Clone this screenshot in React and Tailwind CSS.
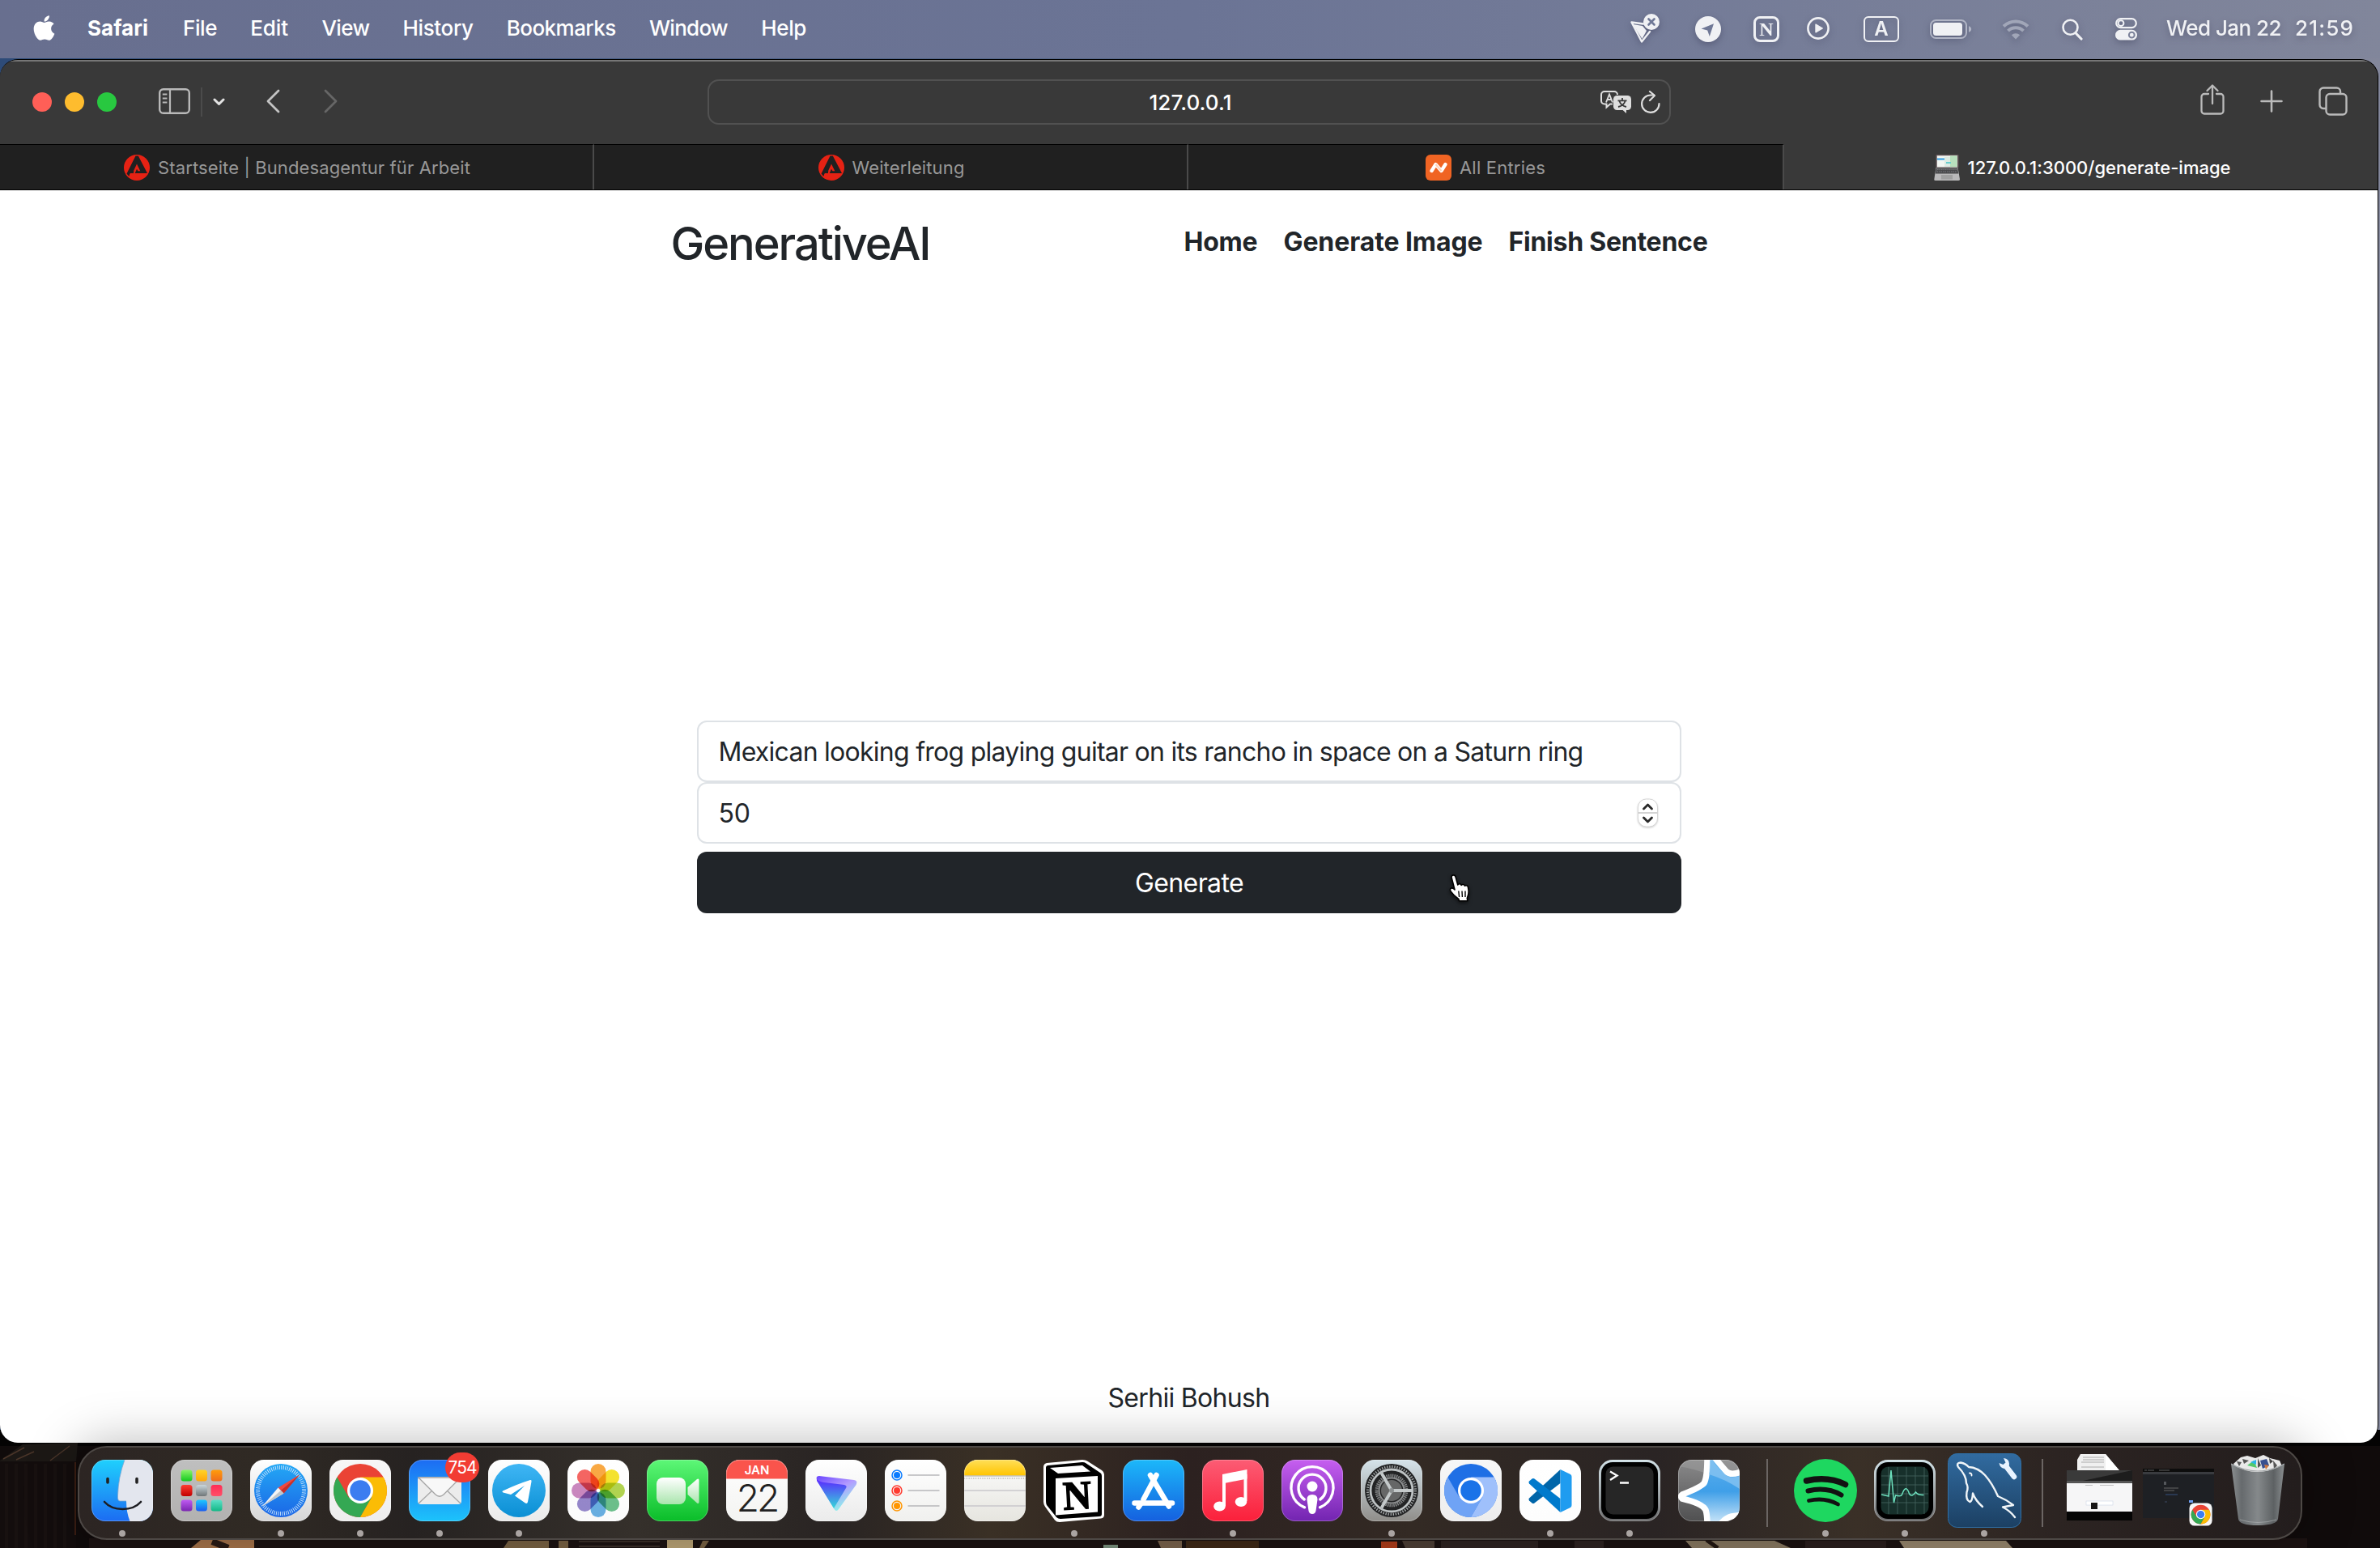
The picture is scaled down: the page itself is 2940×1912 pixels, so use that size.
import { useLayoutEffect, useRef, useState } from "react";
import { FaApple } from "react-icons/fa";

/* Text whose tracking is adjusted so that it spans a given width. */
function Fit({ w, className = "", children }) {
  const ref = useRef(null);
  const [ls, setLs] = useState(0);
  useLayoutEffect(() => {
    const natural = ref.current.getBoundingClientRect().width;
    setLs((w - natural) / children.length);
  }, []);
  return (
    <span ref={ref} className={"inline-block whitespace-pre " + className} style={{ letterSpacing: ls + "px" }}>
      {children}
    </span>
  );
}

/* ---------- Menu bar ---------- */

function MenuBar() {
  const menus = [
    ["File", 42], ["Edit", 47], ["View", 59], ["History", 87],
    ["Bookmarks", 135], ["Window", 97], ["Help", 56],
  ];
  return (
    <header className="flex h-[72px] shrink-0 items-center bg-linear-to-r from-[#686f8f] via-[#6b7495] to-[#81869b] pr-[32px] pb-[3px] pl-[41px] text-[26px] text-white">
      <FaApple className="mb-[1px] h-[35px] w-[27px]" />
      <Fit w={75} className="ml-[40px] font-bold">Safari</Fit>
      <nav className="ml-[43px] flex gap-[41.2px] font-medium">
        {menus.map(([t, w]) => <Fit key={t} w={w}>{t}</Fit>)}
      </nav>
      <div className="ml-auto flex items-center text-[#f0f1f4] drop-shadow-[0_3px_4px_rgba(40,40,70,0.35)]">
        <svg className="h-[36px] w-[36px]" viewBox="0 0 36 36" fill="none">
          <path d="M1.5 10.5 16 12.5M1.5 10.5 14 34.5 24 22" stroke="currentColor" strokeWidth="2.4" strokeLinejoin="round" strokeLinecap="round" />
          <path d="M3 13 15 15 20 21 14.5 31Z" fill="currentColor" />
          <circle cx="26" cy="10" r="10" fill="currentColor" />
          <path d="M22.5 6.5 29.5 13.5M29.5 6.5 22.5 13.5" stroke="#6f7896" strokeWidth="2.6" strokeLinecap="round" />
        </svg>
        <svg className="mt-[2px] ml-[44px] h-[32px] w-[32px]" viewBox="0 0 32 32">
          <circle cx="16" cy="16" r="16" fill="currentColor" />
          <path d="M23 9.3 7.6 15.4 15.2 17.6 17.8 25Z" fill="#6f7896" />
        </svg>
        <svg className="mt-[2px] ml-[40px] h-[32px] w-[32px]" viewBox="0 0 32 32" fill="none">
          <rect x="1.5" y="1.5" width="29" height="29" rx="6.5" stroke="currentColor" strokeWidth="3" />
          <text x="16" y="24" textAnchor="middle" fontFamily="Liberation Serif, serif" fontWeight="bold" fontSize="24" fill="currentColor">N</text>
        </svg>
        <svg className="ml-[34px] h-[28px] w-[28px]" viewBox="0 0 28 28" fill="none">
          <circle cx="14" cy="14" r="12.6" stroke="currentColor" strokeWidth="2.6" />
          <path d="M11 9.2v9.6L19.3 14Z" fill="currentColor" stroke="currentColor" strokeWidth="1.4" strokeLinejoin="round" />
        </svg>
        <span className="mt-[2px] ml-[42px] flex h-[32px] w-[44px] items-center justify-center rounded-[6px] border-[2.4px] border-current text-[24px] leading-none font-semibold">A</span>
        <svg className="mt-[2px] ml-[38px] h-[24px] w-[52px]" viewBox="0 0 52 24" fill="none">
          <rect x="1" y="1" width="44" height="22" rx="6.5" stroke="#b1b5c5" strokeWidth="2" />
          <rect x="4" y="4" width="36" height="16" rx="3.5" fill="currentColor" />
          <path d="M48 8.2c2 .6 3.2 2 3.2 3.8S50 15.200 48 15.800Z" fill="#b1b5c5" />
        </svg>
        <svg className="mt-[2px] ml-[37px] h-[26px] w-[34px] text-[#a1a6b8]" viewBox="0 0 34 26" fill="none">
          <path d="M2 9.500a21.500 21.500 0 0 1 30 0" stroke="currentColor" strokeWidth="4" />
          <path d="M7.500 15.200a13.500 13.500 0 0 1 19 0" stroke="currentColor" strokeWidth="4" />
          <path d="M17 25.500 11.800 20.300a7.400 7.400 0 0 1 10.400 0Z" fill="currentColor" />
        </svg>
        <svg className="mt-[3px] ml-[40px] h-[27px] w-[26px]" viewBox="0 0 26 27" fill="none" stroke="currentColor" strokeLinecap="round">
          <circle cx="10.500" cy="10.800" r="9" strokeWidth="2.600" />
          <path d="M17.200 18 24 25" strokeWidth="3.200" />
        </svg>
        <svg className="mt-[2px] ml-[40px] h-[28px] w-[27px]" viewBox="0 0 27 28" fill="none">
          <rect x="1.200" y="1.200" width="24.600" height="11" rx="5.500" stroke="currentColor" strokeWidth="2.200" />
          <circle cx="7" cy="6.700" r="3.400" stroke="currentColor" strokeWidth="2" />
          <rect x="0" y="14.800" width="27" height="12.800" rx="6.400" fill="currentColor" />
          <circle cx="20.300" cy="21.200" r="3.400" stroke="#7b8199" strokeWidth="2" />
        </svg>
        <Fit w={142} className="ml-[36px] font-medium">Wed Jan 22</Fit>
        <Fit w={73} className="ml-[17px] font-medium">21:59</Fit>
      </div>
    </header>
  );
}

/* ---------- Browser chrome ---------- */

function Toolbar() {
  return (
    <div className="grid h-[104px] grid-cols-[874px_1190px_1fr] items-center border-t-2 border-[#777777] bg-[#393939] pb-[2px]">
      <div className="flex items-center pl-[40px]">
        <div className="flex gap-[16px]">
          <i className="size-[24px] rounded-full bg-[#ff5f57]" />
          <i className="size-[24px] rounded-full bg-[#febc2e]" />
          <i className="size-[24px] rounded-full bg-[#28c840]" />
        </div>
        <svg className="mb-[3px] ml-[52px] h-[32px] w-[39px] text-[#b9b9b9]" viewBox="0 0 39 32" fill="none" stroke="currentColor">
          <rect x="1.200" y="1.200" width="36.600" height="29.600" rx="4.500" strokeWidth="2.400" />
          <path d="M14 1v30" strokeWidth="2.200" />
          <path d="M4.800 7.500h5.600M4.800 12.500h5.600M4.800 17.500h5.600" strokeWidth="2" />
        </svg>
        <i className="ml-[13px] h-[36px] w-[2px] bg-[#4b4b4b]" />
        <svg className="ml-[13px] h-[10px] w-[15px]" viewBox="0 0 15 10" fill="none" stroke="#e3e3e3" strokeWidth="3" strokeLinecap="round" strokeLinejoin="round"><path d="M2 2l5.500 5.500L13 2" /></svg>
        <svg className="mb-[3px] ml-[51px] h-[30px] w-[17px]" viewBox="0 0 17 30" fill="none" stroke="#c4c4c4" strokeWidth="2.800" strokeLinecap="round" strokeLinejoin="round"><path d="M15 2 2 15l13 13" /></svg>
        <svg className="mb-[3px] ml-[54px] h-[30px] w-[17px]" viewBox="0 0 17 30" fill="none" stroke="#666666" strokeWidth="2.800" strokeLinecap="round" strokeLinejoin="round"><path d="M2 2l13 13L2 28" /></svg>
      </div>
      <div className="flex h-[56px] items-center rounded-[14px] border-2 border-[#515151] text-[26px] font-medium text-white">
        <span className="w-[1101px] pl-[88px] text-center"><Fit w={102}>127.0.0.1</Fit></span>
        <svg className="h-[28px] w-[38px] shrink-0" viewBox="0 0 38 28" fill="none">
          <path d="M15 16.500h-3L7.500 20.500v-4H5A4 4 0 0 1 1 12.500v-7.500A4 4 0 0 1 5 1h12a4 4 0 0 1 4 4" stroke="#dedede" strokeWidth="2" />
          <path d="M7 14.500 11 4.500l4 10M8.300 11h5.400" stroke="#dedede" strokeWidth="1.900" />
          <rect x="16" y="6" width="22" height="18" rx="4.500" fill="#dedede" />
          <path d="M26.500 23v0l5.500 5v-5Z" fill="#dedede" />
          <path d="M21.500 12.300h11M27 9v3M23.500 13c1 3 4 6 8.500 7M30.500 13c-1 3-4 6-8.500 7" stroke="#393939" strokeWidth="1.800" />
        </svg>
        <svg className="ml-[12px] h-[28px] w-[24px] shrink-0" viewBox="0 0 24 28" fill="none" stroke="#dedede" strokeWidth="2.200" strokeLinecap="round" strokeLinejoin="round">
          <path d="M22.500 16A10.700 10.700 0 1 1 11.800 5.500H16" />
          <path d="M11 1l6 5-6 6" />
        </svg>
      </div>
      <div className="flex items-center justify-end pr-[37px] pb-[3px] text-[#bababa]">
        <svg className="mb-[3px] h-[38px] w-[30px]" viewBox="0 0 30 38" fill="none" stroke="currentColor" strokeWidth="2.300" strokeLinecap="round" strokeLinejoin="round">
          <path d="M10 12H5a3.500 3.500 0 0 0-3.500 3.500V33A3.500 3.500 0 0 0 5 36.500h20a3.500 3.500 0 0 0 3.500-3.500V15.500A3.500 3.500 0 0 0 25 12h-5M15 24V2M8.500 8 15 1.500 21.500 8" />
        </svg>
        <svg className="ml-[44px] h-[28px] w-[28px]" viewBox="0 0 28 28" fill="none" stroke="currentColor" strokeWidth="2.600" strokeLinecap="round"><path d="M14 1.500v25M1.500 14h25" /></svg>
        <svg className="ml-[44px] h-[36px] w-[36px]" viewBox="0 0 36 36" fill="none" stroke="currentColor" strokeWidth="2.400">
          <rect x="9.500" y="9" width="25" height="25.500" rx="4.500" />
          <path d="M9 27H6a4.500 4.500 0 0 1-4.500-4.500V6A4.500 4.500 0 0 1 6 1.500h16.500A4.500 4.500 0 0 1 27 6v3" />
        </svg>
      </div>
    </div>
  );
}

const AgencyIcon = () => (
  <svg className="size-[32px]" viewBox="0 0 32 32">
    <circle cx="16" cy="16" r="16" fill="#e62214" />
    <path d="M14.500 1.500h3.300L29 23H7.800L6.500 27 3.500 23.500Z" fill="#202020" />
    <path d="M12.300 19.500 16 11.500l4.300 8.800h-2.800L16 17.800l-2.300 5.200-2.300 4.500Z" fill="#e62214" />
    <path d="M7.500 24h20.500A16 16 0 0 1 5.800 28.300Z" fill="#e62214" />
  </svg>
);
const NamecheapIcon = () => (
  <svg className="size-[32px]" viewBox="0 0 32 32">
    <rect width="32" height="32" rx="6" fill="#f06423" />
    <path d="M7.500 20 12.500 12 19.500 20 24.500 12" stroke="#fff" strokeWidth="4.300" fill="none" strokeLinecap="round" strokeLinejoin="round" />
    <path d="M12.500 12 19.500 20" stroke="#ffd2b8" strokeWidth="2" />
  </svg>
);
const LaptopIcon = () => (
  <svg className="size-[32px]" viewBox="0 0 32 32">
    <rect x="2.500" y="0" width="28" height="16" rx="1" fill="#6b5a5e" />
    <rect x="3.800" y="1.300" width="25" height="14" fill="#f3f7f2" />
    <path d="M13 3h7v12h-7Z" fill="#dcebe3" /><path d="M20 1.300h8.800v14H20Z" fill="#b8e0bd" />
    <path d="M4 4.500h9v2H4Z" fill="#2f9be0" /><path d="M15 9h6v2h-6Z" fill="#69cfd0" />
    <path d="M2.500 16h27L32 30.500Q32 32 30 32H2Q0 32 .3 30.500Z" fill="#b9b8b9" />
    <path d="M2.800 16.500h26.400l1 7H1.800Z" fill="#4a4a4c" />
    <path d="M4 18.500h24M3.500 21h25" stroke="#85858a" strokeWidth=".8" strokeDasharray="1.500 1" />
    <path d="M9 25h14v5.500H9Z" fill="#a0a0a0" />
  </svg>
);

function Tabs() {
  const tabs = [
    { icon: <AgencyIcon />, t: "Startseite | Bundesagentur für Arbeit", w: 386, box: "w-[734px] pl-[2px]" },
    { icon: <AgencyIcon />, t: "Weiterleitung", w: 139, box: "w-[734px] pl-[2px]" },
    { icon: <NamecheapIcon />, t: "All Entries", w: 106, box: "w-[736px]" },
  ];
  return (
    <div className="flex h-[57px] border-b border-black bg-[#393939] text-[22px]">
      {tabs.map(({ icon, t, w, box }) => (
        <div key={t} className={"flex shrink-0 items-center justify-center gap-[10px] border-t border-r-2 border-t-black border-r-[#4a4a4a] bg-[#202020] pt-[1px] text-[#989898] " + box}>
          {icon}
          <Fit w={w} className="pt-px">{t}</Fit>
        </div>
      ))}
      <div className="flex grow items-center justify-center gap-[10px] pt-[2px] pl-[3px] font-medium text-white">
        <LaptopIcon />
        <Fit w={325} className="pt-px">127.0.0.1:3000/generate-image</Fit>
      </div>
    </div>
  );
}

/* ---------- Web page ---------- */

function HandCursor() {
  return (
    <svg className="absolute top-[27px] left-[926px] h-[38px] w-[32px] drop-shadow-[0_2px_2px_rgba(0,0,0,0.6)]" viewBox="0 0 32 38">
      <path d="M6 4.500c0-3.500 4.600-3.500 5.200 0l2.600 9.500c.8-2 3.800-1.800 4.300.4 1-1.500 3.900-1.100 4.300.8 1.300-1.200 3.900-.4 4.100 1.800 .8 3.500 .8 8-.4 11l-.8 2.500 .6 3.200H15.500l-.6-2.200C11.500 29 8.500 27 5.500 22.500c-2.600-3.600.4-6 3.400-3.600l1.100 1Z" fill="#fff" stroke="#000" strokeWidth="1.600" strokeLinejoin="round" />
      <path d="M14.800 21.500l.8 7.500M19 21.500l.4 7.500M23 21.500v7.500" stroke="#000" strokeWidth="1.400" />
    </svg>
  );
}

function Page() {
  return (
    <main className="flex grow flex-col bg-white text-[32px] text-[#212529]">
      <header className="mx-auto flex w-[1280px] items-center justify-between pt-[30px]">
        <Fit w={320} className="pt-px text-[56px] leading-[70px] font-medium">GenerativeAI</Fit>
        <nav className="-mr-px flex gap-[32px] pb-[4px] font-bold">
          <Fit w={91}>Home</Fit>
          <Fit w={246}>Generate Image</Fit>
          <Fit w={246}>Finish Sentence</Fit>
        </nav>
      </header>
      <form className="mx-auto mt-[554px] flex w-[1216px] flex-col">
        <div className="flex h-[76px] items-center rounded-[12px] border-2 border-[#dee2e6] pt-[2px] pl-[25px]">
          <Fit w={1068}>Mexican looking frog playing guitar on its rancho in space on a Saturn ring</Fit>
        </div>
        <div className="flex h-[76px] items-center justify-between rounded-[12px] border-2 border-[#dee2e6] pr-[27px] pl-[25px]">
          <Fit w={39} className="pt-[2px]">50</Fit>
          <svg className="h-[36px] w-[25px] drop-shadow-[0_1px_1px_rgba(0,0,0,0.2)]" viewBox="0 0 25 36" fill="none">
            <rect x=".5" y="1" width="24" height="34" rx="10" fill="#fff" stroke="#d6d6d6" />
            <path d="M0 18h25" stroke="#d3d3d3" strokeWidth="2" />
            <path d="M7.500 13l5-5 5 5M7.500 24l5 5 5-5" stroke="#2a2a2a" strokeWidth="2.800" strokeLinecap="round" strokeLinejoin="round" />
          </svg>
        </div>
        <div className="relative mt-[10px] flex h-[76px] items-center justify-center rounded-[12px] bg-[#212529] pt-[2px] pl-px text-white">
          <Fit w={134}>Generate</Fit>
          <HandCursor />
        </div>
      </form>
      <footer className="mt-auto flex h-[110px] items-center justify-center"><Fit w={200}>Serhii Bohush</Fit></footer>
    </main>
  );
}

/* ---------- Dock ---------- */

const Grad = ({ id, a, b, m }) => (
  <linearGradient id={id} x1="0" y1="0" x2="0" y2="1">
    <stop offset="0" stopColor={a} />
    {m && <stop offset=".5" stopColor={m} />}
    <stop offset="1" stopColor={b} />
  </linearGradient>
);
const Tile = ({ id, a, b, children }) => (
  <svg className="size-[76px] overflow-visible" viewBox="0 0 76 76" fill="none">
    <defs>
      <Grad id={id} a={a} b={b} />
      <clipPath id={id + "clip"}><rect width="76" height="76" rx="17" /></clipPath>
    </defs>
    <g clipPath={`url(#${id}clip)`}>
      <rect width="76" height="76" fill={`url(#${id})`} />
      {children}
    </g>
    <rect x=".5" y=".5" width="75" height="75" rx="16.500" stroke="#ffffff" strokeOpacity=".25" />
  </svg>
);

const Finder = () => (
  <Tile id="finder" a="#1fd0fd" b="#1c6cf2">
    <path d="M41 0Q33 22 32.500 44 32 50.500 35 51H43q0 14 4.500 25H76V0Z" fill="#e3e6ee" />
    <path d="M41 0Q33 22 32.500 44 32 51 35 51H43" stroke="#7fa6cf" strokeWidth=".8" />
    <path d="M20 23.500v4.500M56 23.500v4.500" stroke="#222" strokeWidth="3.600" strokeLinecap="round" />
    <path d="M16 52Q24 61 38.500 61T61 52" stroke="#1d1d22" strokeWidth="2.600" strokeLinecap="round" />
  </Tile>
);
const pads = [
  ["#8bf36a", "#13c91e"], ["#ffd426", "#ffa60a"], ["#ff9d0a", "#ef6c1c"],
  ["#ff3b30", "#c10000"], ["#c9d6dc", "#707678"], ["#ff2d55", "#ff4f68"],
  ["#bf5af2", "#7a26b0"], ["#1fc8ff", "#1a5cf0"], ["#5de0c8", "#12b886"],
];
const Launchpad = () => (
  <Tile id="launch" a="#bfbfbf" b="#b2b1b0">
    <defs>{pads.map(([a, b], i) => <Grad key={i} id={"pad" + i} a={a} b={b} />)}</defs>
    {pads.map((p, i) => <rect key={i} x={12.500 + (i % 3) * 18.500} y={12.500 + Math.floor(i / 3) * 18.500} width="14" height="14" rx="3.500" fill={`url(#pad${i})`} />)}
  </Tile>
);
const Safari = () => (
  <Tile id="safari" a="#ffffff" b="#d6d6d6">
    <defs><Grad id="saf2" a="#23a8f5" b="#1b66e6" /></defs>
    <circle cx="38" cy="38" r="33" fill="url(#saf2)" />
    <circle cx="38" cy="38" r="28.500" stroke="#cfe8fd" strokeWidth="5" strokeDasharray=".9 1.590" />
    <path d="M61 18.500 34.500 34.500 41.500 41.500Z" fill="#f0483e" />
    <path d="M15 57.500 34.500 34.500 41.500 41.500Z" fill="#f4f4f4" />
    <path d="M61 18.500 41.500 41.500 38 38Z" fill="#c4302b" /><path d="M15 57.500 41.500 41.500 38 38Z" fill="#bfc6cc" />
  </Tile>
);
const ChromeMark = ({ r = 33, c = ["#ea4335", "#34a853", "#fbbc05", "#3b7df0"] }) => (
  <g transform={`translate(38 38) scale(${r / 33})`}>
    <circle r="33" fill={c[0]} />
    <path d="M-28.600-16.500A33 33 0 0 0 0 33L14.300 8.200H-14.300Z" fill={c[1]} />
    <path d="M28.600-16.500A33 33 0 0 1 0 33L14.300 8.200 0-16.500Z" fill={c[2]} />
    <circle r="16" fill="#fff" /><circle r="12.800" fill={c[3]} />
  </g>
);
const Chrome = () => <Tile id="chrome" a="#f7f7f7" b="#ededed"><ChromeMark /></Tile>;
const Chromium = () => (
  <Tile id="chromium" a="#f7f7f7" b="#ededed"><ChromeMark c={["#1f6fe5", "#6fa3f5", "#9fc0fb", "#1a73e8"]} /></Tile>
);
const Mail = () => (
  <div className="relative">
    <Tile id="mail" a="#1d6cf3" b="#1cc3fb">
      <rect x="11" y="21" width="54" height="34" rx="4" fill="#ececec" />
      <path d="M12 54 30 37M64 54 46 37" stroke="#a9a9a9" strokeWidth="1.400" />
      <path d="M12 22 33 43q5 4.500 10 0L64 22Z" fill="#f8f8f8" stroke="#a3a3a3" strokeWidth="1.300" />
    </Tile>
    <span className="absolute -top-[9px] -right-[11px] flex h-[37px] w-[42px] items-center justify-center rounded-full bg-[#f23c33] text-[21px] font-normal tracking-[-1px] text-white">754</span>
  </div>
);
const Telegram = () => (
  <Tile id="tg" a="#ffffff" b="#eaeaea">
    <defs><Grad id="tg2" a="#3fb6f5" b="#0a8fd4" /></defs>
    <circle cx="38" cy="38" r="33" fill="url(#tg2)" />
    <path d="M18 38.500Q36 30 52 25q2-.5 1.500 2L49 52q-.8 3-3.500 1.200L33 44.500 45 32 28 43 18.500 40.500q-2-1-.5-2Z" fill="#fff" />
  </Tile>
);
const petals = ["#f99d2a", "#f4df12", "#a9cf38", "#57b97c", "#55a5e0", "#8878c5", "#c478b8", "#f4504c"];
const Photos = () => (
  <Tile id="photos" a="#ffffff" b="#fbfbfb">
    {petals.map((c, i) => <rect key={c} x="28.500" y="5" width="19" height="31" rx="9.500" fill={c} opacity=".88" transform={`rotate(${i * 45} 38 38)`} className="mix-blend-multiply" />)}
  </Tile>
);
const FaceTime = () => (
  <Tile id="ft" a="#5df777" b="#0abd29">
    <defs><Grad id="ft2" a="#ffffff" b="#a9e5ad" /></defs>
    <rect x="12" y="22" width="36" height="33" rx="8" fill="url(#ft2)" />
    <path d="M50.500 34 62 24q2.500-1.500 2.500 1.500v26.500q0 3-2.500 1.500L50.500 43Z" fill="url(#ft2)" />
  </Tile>
);
const Calendar = () => (
  <Tile id="cal" a="#ffffff" b="#f3f3f1">
    <rect width="76" height="23.500" fill="#fa544c" />
    <text x="38" y="18" textAnchor="middle" fontFamily="Inter, sans-serif" fontWeight="600" fontSize="15" fill="#fff">JAN</text>
    <text x="38" y="64" textAnchor="middle" fontFamily="Inter, sans-serif" fontWeight="300" fontSize="46" letterSpacing="-3" fill="#222">22</text>
  </Tile>
);
const Proton = () => (
  <Tile id="pv" a="#ffffff" b="#ebebeb">
    <defs>
      <linearGradient id="pv1" x1="0" y1="0" x2=".6" y2="1"><stop offset="0" stopColor="#6a45ff" /><stop offset=".5" stopColor="#b39bff" /><stop offset="1" stopColor="#8df5ea" /></linearGradient>
      <Grad id="pv2" a="#5a26ff" b="#35d8d8" />
    </defs>
    <path d="M17 20 60 25q5 1 2.500 6L41 61q-3 4-5.500 0L14 25q-1.500-5 3-5Z" fill="url(#pv1)" />
    <path d="M14 24q2 3 6 3.500L48 31q4 1 2 4L35 60 14 26Z" fill="url(#pv2)" />
  </Tile>
);
const Reminders = () => (
  <Tile id="rem" a="#ffffff" b="#f0f0ee">
    {["#0a7bff", "#ff3b30", "#ff9500"].map((c, i) => (
      <g key={c}>
        <circle cx="15" cy={19 + i * 19} r="6" stroke={c} strokeWidth="1.500" /><circle cx="15" cy={19 + i * 19} r="4" fill={c} />
        <path d={`M28.500 ${19 + i * 19}h39`} stroke="#b7b7ba" strokeWidth="1.500" />
      </g>
    ))}
  </Tile>
);
const Notes = () => (
  <Tile id="notes" a="#fcfcfc" b="#e6e5df">
    <defs><Grad id="nt" a="#ffdf58" b="#ffc400" /></defs>
    <rect width="76" height="19.500" fill="url(#nt)" />
    <path d="M0 20h76" stroke="#aaa8a0" /><path d="M0 23h76" stroke="#c5c4bf" strokeWidth="2" strokeDasharray="1.200 1.600" />
    <path d="M0 38h76M0 57h76" stroke="#c9c8cb" strokeWidth="1.300" />
  </Tile>
);
const Notion = () => (
  <svg className="size-[80px]" viewBox="0 0 80 80" fill="none">
    <path d="M6 6 50 2q4 0 6 1.500L74 15q3 2 3 5v50q0 4-4 4.500L22 79q-4 0-6-2.500L4 60q-2-3-2-6V11q0-4 4-5Z" fill="#fff" />
    <path d="M8 9 50 5q3 0 4 1L72 18q2 1 2 4v47q0 3-3 3L23 75q-3 0-5-2L6 58q-1-2-1-5V12q0-3 3-3Z" fill="#000" />
    <path d="M10 12 50 9 60 16.500 20 19Z" fill="#fff" />
    <path d="M17 25 69 22V66.500L17 70.500Z" fill="#fff" />
    <text x="43.500" y="63" textAnchor="middle" transform="rotate(-3 43 46)" fontFamily="Liberation Serif, serif" fontWeight="bold" fontSize="50" textLength="35" lengthAdjust="spacingAndGlyphs" fill="#000" stroke="#000" strokeWidth="1.500">N</text>
  </svg>
);
const AppStore = () => (
  <Tile id="as" a="#1cb8fa" b="#1560df">
    <g stroke="#fff" strokeWidth="6.500" strokeLinecap="round">
      <path d="M14.500 53.500H61" /><path d="M41.500 19 25.500 49" /><path d="M34 19 57 57.500" /><path d="M21.500 55.500 19.500 58.500" />
    </g>
  </Tile>
);
const Music = () => (
  <Tile id="mu" a="#fc5c74" b="#fb1f3a">
    <path d="M27 24v33M53.500 18v33" stroke="#fff" strokeWidth="4" />
    <path d="M25 18 55.500 12v11.500L25 29.500Z" fill="#fff" />
    <ellipse cx="21.500" cy="57.500" rx="7.300" ry="6" fill="#fff" /><ellipse cx="48" cy="52" rx="7.300" ry="6" fill="#fff" />
  </Tile>
);
const Podcasts = () => (
  <Tile id="pod" a="#c65ff0" b="#7224b0">
    <path d="M28.500 59.800A26 26 0 1 1 47.500 59.800" stroke="#fff" strokeWidth="3.400" strokeLinecap="round" transform="translate(0 -1)" />
    <path d="M28.200 48.500A17 17 0 1 1 47.800 48.500" stroke="#fff" strokeWidth="3.400" strokeLinecap="round" transform="translate(0 .5)" />
    <circle cx="38" cy="33" r="6.500" fill="#fff" />
    <path d="M31.500 49q0-6 6.500-6t6.500 6L42.500 63q-.8 4-4.500 4t-4.500-4Z" fill="#fff" />
  </Tile>
);
const Settings = () => (
  <Tile id="set" a="#d5e3ea" b="#8f8d89">
    <circle cx="38" cy="38" r="33" fill="#232425" />
    <circle cx="38" cy="38" r="29.500" stroke="#a9adae" strokeWidth="3" strokeDasharray="1.300 1.790" />
    <circle cx="38" cy="38" r="26" stroke="#bec3c4" strokeWidth="2.800" />
    <circle cx="38" cy="38" r="18.500" stroke="#858788" strokeWidth="3.800" strokeDasharray="1.500 1" />
    <circle cx="38" cy="38" r="15.500" stroke="#8b8d8e" strokeWidth="2" />
    <circle cx="38" cy="38" r="13" fill="#666767" />
    <path d="M38 38H63M38 38 25.500 16.500M38 38 25.500 59.500" stroke="#c4c9ca" strokeWidth="3.800" />
    <circle cx="38" cy="38" r="3" fill="#8c9091" />
  </Tile>
);
const VsCode = () => (
  <Tile id="vs" a="#ffffff" b="#fdfdfd">
    <path d="M50.500 12 12 47.500q-1.200 1.500 0 3L15.500 53.500q1.500 1 3 0L50.500 29Z" fill="#0065a9" />
    <path d="M50.500 65 12 29.500q-1.200-1.500 0-3L15.500 23.500q1.500-1 3 0L50.500 48Z" fill="#007acc" />
    <path d="M50.500 12 63 18q1.500 1 1.500 3V56q0 2-1.500 3L50.500 65Z" fill="#1f9cf0" />
  </Tile>
);
const Terminal = () => (
  <Tile id="term" a="#cfe0e6" b="#6a6a6b">
    <rect x="3" y="3" width="70" height="70" rx="14" fill="#000" /><rect x="8.500" y="8.500" width="59" height="59" rx="9" fill="#262626" />
    <path d="M14 14.500 22.500 19.500 14 25M26 28.500h11" stroke="#fff" strokeWidth="2.400" />
  </Tile>
);
const Anki = () => (
  <Tile id="anki" a="#8a8a8b" b="#505051">
    <defs><Grad id="ank" a="#5db0ee" m="#3f9fe8" b="#d8ecfa" /></defs>
    <path d="M0 8Q40 14 76 38V0H0Z" fill="#a0a0a0" opacity=".5" />
    <path d="M36-4Q36 22 32 29 28 34 5 43 2 45 5 48 30 54 34 62 36 68 36 82H50Q58 72 66 70L80 68V14Q66 20 60 15 52 6 44-4Z" fill="url(#ank)" stroke="#fff" strokeWidth="7.500" />
    <path d="M39 0Q39 12 38 18 58 24 76 36V20Q62 24 57 17 47 8 42 0Z" fill="#8fc7f2" opacity=".7" />
  </Tile>
);
const Spotify = () => (
  <svg className="size-[78px]" viewBox="0 0 78 78" fill="none" stroke="#121212" strokeLinecap="round">
    <circle cx="39" cy="39" r="39" fill="#1ed760" stroke="none" />
    <path d="M15.500 27Q42 21 63.500 31.500" strokeWidth="7.500" /><path d="M17.500 39.500Q40 34 58.500 44.500" strokeWidth="6" /><path d="M18.500 51.500Q38 47 54.500 56" strokeWidth="4.800" />
  </svg>
);
const Activity = () => (
  <Tile id="act" a="#cfe0e6" b="#6a6a6b">
    <rect x="3" y="3" width="70" height="70" rx="14" fill="#000" />
    <rect x="8.500" y="8.500" width="59" height="59" rx="9" fill="#17302b" />
    <path d="M18 9v58M29 9v58M40 9v58M51 9v58M62 9v58M9 20h58M9 31h58M9 42h58M9 53h58" stroke="#48665f" strokeWidth=".8" />
    <path d="M9 43q5 1 9 2l3-32 3.500 40 2-9q7 2 8-1 5-14 9-1 3 5 8-2 3 4 10 3.500" stroke="#6ce0bd" strokeWidth="1.500" />
  </Tile>
);
const Workbench = () => (
  <svg className="h-[92px] w-[91px]" viewBox="0 0 91 92" fill="none">
    <defs><Grad id="wb" a="#316ba0" b="#1c4063" /></defs>
    <rect x=".5" y=".5" width="90" height="91" rx="11" fill="url(#wb)" stroke="#2f6fa5" />
    <path d="M43 66Q34 58 31 49.500 30.500 59 27.500 60 22 58 23.500 48 26 42 23 37 23 27 13 17 10 12 16 11.500 22 12.500 26 17 37 17.500 46 27 55 37 62 53 72 57 81 64L68 66.500Q77 71 83 79" stroke="#f0f5f8" strokeWidth="2.400" strokeLinejoin="round" strokeLinecap="round" />
    <path d="M27 24.500q3 0 2.500 3" stroke="#fff" strokeWidth="1.800" strokeLinecap="round" />
    <path d="M72 16 82 29" stroke="#e9f3ff" strokeWidth="6.500" strokeLinecap="round" />
    <path d="M63.500 12q1 7 7.500 7 5 0 5-6 0-6-7-7l2.500 5.500-3 2.500Z" fill="#e9f3ff" />
  </svg>
);
const Preview = () => (
  <svg className="h-[82px] w-[81px]" viewBox="0 0 81 82">
    <path d="M13 7 17 0H48L65 21H13Z" fill="#f0f0f0" /><path d="M48 0V20H65Z" fill="#fff" />
    <path d="M20 4h26M20 7h26M18 10h28M18 16h28" stroke="#999" strokeWidth=".8" />
    <rect y="20" width="81" height="62" fill="#050505" /><rect y="20" width="81" height="13" fill="#3a3a3a" /><path d="M81 20v13H20Z" fill="#1d1d1d" />
    <rect y="33" width="81" height="3" fill="#555" /><rect y="36" width="81" height="35" fill="#f6f6f7" />
    <rect x="24" y="58" width="33" height="5" fill="#fff" stroke="#cdd5e6" strokeWidth=".6" /><rect x="30" y="60" width="8" height="8" fill="#151515" />
    <path d="M23 38.500h9M41 38.500h17" stroke="#aaa" strokeWidth=".7" />
  </svg>
);
const ChromeWindow = () => (
  <svg className="h-[71px] w-[88px]" viewBox="0 0 88 71">
    <rect width="88" height="61" fill="#1e2024" /><rect width="88" height="4" fill="#0d0d0d" /><rect y="4" width="88" height="3" fill="#393b3f" />
    <path d="M2 2h3M6 2h8M20 2h13" stroke="#777" strokeWidth=".8" />
    <path d="M26 24h18M26 27h13" stroke="#777" strokeWidth=".8" /><path d="M28 32h15" stroke="#35507e" />
    <rect x="26" y="16" width="3" height="4" fill="#55585c" /><rect x="57" y="39" width="5" height="3" fill="#6c9cf0" /><path d="M27 41h3" stroke="#3d4962" />
    <g transform="translate(57.500 42.500) scale(.37)"><rect width="76" height="76" rx="17" fill="#f7f7f7" /><ChromeMark r={32} /></g>
  </svg>
);
const Trash = () => (
  <svg className="h-[88px] w-[66px]" viewBox="0 0 66 88">
    <defs><linearGradient id="tr" x1="0" x2="1"><stop offset="0" stopColor="#8b8f91" /><stop offset=".2" stopColor="#666a6d" /><stop offset=".5" stopColor="#85898b" /><stop offset=".8" stopColor="#5d6163" /><stop offset="1" stopColor="#8b8f91" /></linearGradient></defs>
    <path d="M3 12 12 4l8-2 10 3L40 1l8 4 12 3 3 7-6 7H9Z" fill="#e9e9e9" />
    <path d="M7 9l6 1-3 5ZM14 6l8 2-6 4Z" fill="#555" /><path d="M20 14l8-6 4 9Z" fill="#52c96b" /><path d="M24 10l7-3v6Z" fill="#2bb5e8" /><path d="M36 8l8-2 3 8-8 4Z" fill="#394f8f" /><path d="M33 5l4 9-4 3ZM52 8l5 6-4 5Z" fill="#555" /><path d="M41 13l6 1-4 5Z" fill="#cf7740" /><path d="M47 5l5 4-4 3Z" fill="#444" />
    <path d="M0 12Q33 32 66 12L58 80Q56 88 33 88T9 80Z" fill="url(#tr)" />
    <path d="M0 12Q33 30 66 12" stroke="#a5a9ab" strokeWidth="1.200" fill="none" />
    <path d="M11 81q22 7 45 0" stroke="#b3b6b8" strokeWidth="1" fill="none" opacity=".6" />
  </svg>
);

const Slot = ({ icon, running, shift = "" }) => (
  <div className="flex h-full w-[98px] shrink-0 flex-col items-center">
    <div className={"flex h-[102px] items-center pt-[4px] " + shift}>{icon}</div>
    {running && <i className="size-[8px] rounded-full bg-[#aaa4a2]" />}
  </div>
);
const Separator = () => (
  <div className="flex w-[46px] shrink-0 justify-center pt-[14px]"><i className="h-[84px] w-[2px] bg-[#6b6563]" /></div>
);

function Dock() {
  const apps = [
    [<Finder />, 1], [<Launchpad />], [<Safari />, 1], [<Chrome />, 1], [<Mail />, 1], [<Telegram />, 1],
    [<Photos />], [<FaceTime />], [<Calendar />], [<Proton />], [<Reminders />], [<Notes />], [<Notion />, 1],
    [<AppStore />], [<Music />, 1], [<Podcasts />], [<Settings />, 1], [<Chromium />], [<VsCode />, 1],
    [<Terminal />, 1], [<Anki />],
  ];
  return (
    <div className="relative mx-[96px] mt-[4px] flex h-[116px] shrink-0 rounded-[36px] border-2 border-[#4d4845] bg-[linear-gradient(90deg,#2c2523_0%,#302a24_8%,#262221_15%,#35302b_25%,#292423_34%,#3a3025_41%,#2c2120_50%,#332a24_60%,#2a2424_71%,#3a3027_80%,#2c2422_89%,#231d1d_100%)] pl-[4px] shadow-[0_0_60px_6px_rgba(0,0,0,0.26)]">
      {apps.map(([icon, running], i) => <Slot key={i} icon={icon} running={running} />)}
      <Separator />
      <Slot icon={<Spotify />} running />
      <Slot icon={<Activity />} running />
      <Slot icon={<Workbench />} running />
      <Separator />
      <Slot icon={<Preview />} shift="-translate-x-[2px] -translate-y-[4px]" />
      <Slot icon={<ChromeWindow />} shift="-translate-x-[2px] translate-y-[8px]" />
      <Slot icon={<Trash />} shift="-translate-x-[2px] -translate-y-[1px]" />
    </div>
  );
}

function Wallpaper() {
  return (
    <svg className="absolute inset-x-0 bottom-0 h-[146px] w-full" viewBox="0 0 2940 146" preserveAspectRatio="none">
      <rect width="2940" height="146" fill="#100b0b" />
      <rect y="0" width="2940" height="20" fill="#040303" />
      <path d="M0 38 28 18 96 16 94 40 0 42Z" fill="#1c1815" />
      <path d="M4 36 30 22M20 37 42 27M62 38 86 20" stroke="#4a3529" strokeWidth="1.500" />
      <rect y="39" width="94" height="107" fill="#130d0d" />
      <path d="M8 42v104M20 42v104M32 42v104M44 42v104M56 42v104M68 42v104M80 42v104" stroke="#181110" strokeWidth="4" />
      <path d="M93 40v90" stroke="#4a2416" strokeWidth="1.500" />
      <rect y="134" x="110" width="2740" height="12" fill="#1c1312" />
      <path d="M248 136h66v10h-78Z" fill="#a9764c" /><path d="M262 138l20 8" stroke="#2a1b15" strokeWidth="8" />
      <path d="M628 137h50v9h-56ZM690 137h12v9h-12Z" fill="#7b6445" />
      <path d="M824 136h32v10h-32Z" fill="#bda678" /><path d="M868 137h8l-6 9h-6Z" fill="#7b6445" />
      <path d="M715 138h100M715 144h100" stroke="#3c302a" strokeWidth="2" />
      <path d="M1363 142h18v4h-18Z" fill="#7c9480" /><path d="M1430 137h30v9h-26Z" fill="#7c654e" />
      <path d="M1465 137h90v9h-90Z" fill="#402a17" /><path d="M1706 138h20v8h-20Z" fill="#b23f1c" /><path d="M1732 137h40v9h-36Z" fill="#4f4138" />
      <path d="M1780 137h120v9h-120ZM1945 137h36v9h-36Z" fill="#2f2422" />
      <path d="M2082 137h110l20 9H2090Z" fill="#8b7b63" /><path d="M2108 136l14 10" stroke="#231812" strokeWidth="5" />
      <path d="M2346 137h132l8 9H2352Z" fill="#9b8a70" /><path d="M2230 137h100v9h-100Z" fill="#2b1f1e" />
    </svg>
  );
}

export default function App() {
  return (
    <div className="relative flex h-[1912px] w-[2940px] flex-col overflow-hidden bg-linear-to-r from-[#2e4b78] to-[#83879b] font-[Inter,sans-serif] antialiased">
      <Wallpaper />
      <MenuBar />
      <div className="relative mt-px mr-[2px] flex h-[1709px] shrink-0 flex-col overflow-hidden rounded-[22px] border-t border-r border-black bg-[#393939]">
        <Toolbar />
        <Tabs />
        <Page />
      </div>
      <Dock />
    </div>
  );
}
